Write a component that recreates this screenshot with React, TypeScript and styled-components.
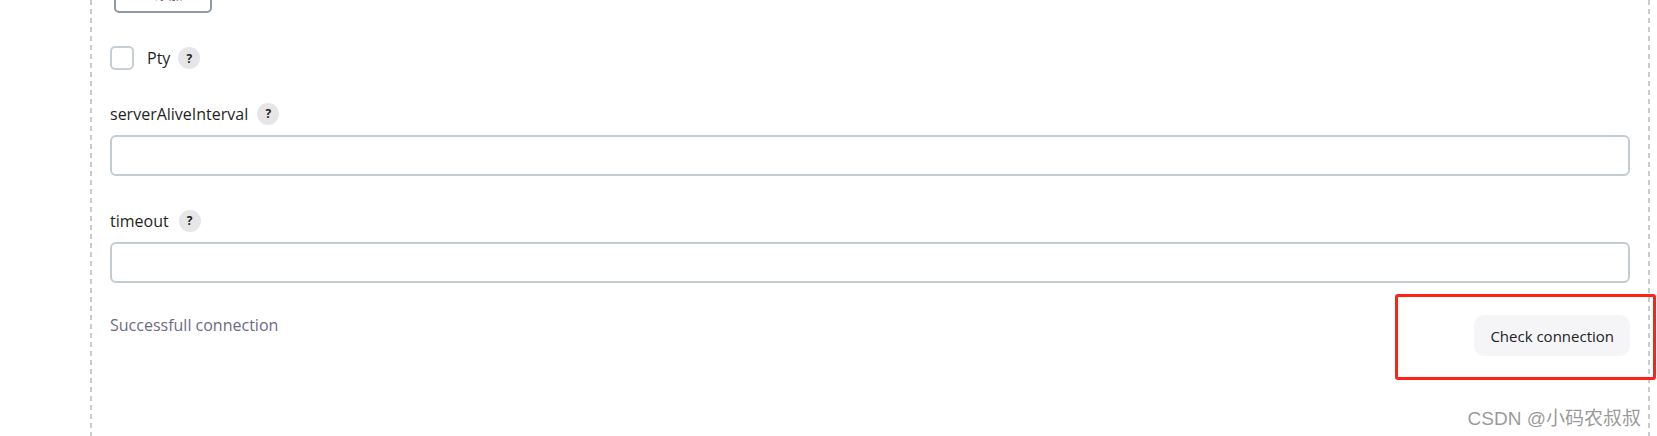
import React from "react";
import styled, { createGlobalStyle } from "styled-components";

const GlobalStyle = createGlobalStyle`
  html, body {
    margin: 0;
    padding: 0;
    background: #ffffff;
    overflow: hidden;
  }
  body {
    font-family: "Open Sans", "Noto Sans", "Noto Sans CJK SC", sans-serif;
    color: #1f1f24;
  }
`;

const dash = "repeating-linear-gradient(to bottom, #c6cdd2 0 5px, transparent 5px 9px)";

const Stage = styled.div`
  position: relative;
  width: 1657px;
  height: 436px;
  overflow: hidden;
`;

const Panel = styled.section`
  margin-left: 90px;
  width: 1560px;
  height: 436px;
  box-sizing: border-box;
  padding: 0 20px 0 20px;
  background: ${dash} left top / 2px 100% no-repeat,
    ${dash} right top / 2px 100% no-repeat;
  display: flex;
  flex-direction: column;
`;

const AddButton = styled.button`
  margin-top: -24px;
  margin-left: 4px;
  width: 98px;
  height: 37px;
  box-sizing: border-box;
  border: 2px solid #8f9aa3;
  border-radius: 5px;
  background: #fff;
  color: #6a7077;
  font-family: "Open Sans", "Noto Sans CJK SC", sans-serif;
  font-size: 14px;
  line-height: 16px;
  padding: 0 0 9px 0;
  display: flex;
  align-items: flex-end;
  justify-content: center;
`;

const CheckRow = styled.label`
  margin-top: 33px;
  height: 24px;
  display: flex;
  align-items: center;
  font-size: 16px;
`;

const CheckBox = styled.span`
  width: 24px;
  height: 24px;
  box-sizing: border-box;
  border: 2px solid #c7cfd4;
  border-radius: 5px;
  margin-right: 13px;
`;

const HelpIcon = styled.span<{ gap?: number }>`
  width: 22px;
  height: 22px;
  border-radius: 50%;
  background: #e6e6e8;
  color: #1e1e22;
  font-size: 12px;
  font-weight: 700;
  display: inline-flex;
  align-items: center;
  justify-content: center;
  margin-left: ${(p) => p.gap ?? 9}px;
`;

const Field = styled.div<{ top: number }>`
  margin-top: ${(p) => p.top}px;
  display: flex;
  flex-direction: column;
`;

const Label = styled.div`
  height: 22px;
  line-height: 22px;
  font-size: 16px;
  display: flex;
  align-items: center;
  color: #1f1f24;
`;

const Input = styled.input`
  margin-top: 10px;
  height: 41px;
  width: 100%;
  box-sizing: border-box;
  border: 2px solid #c3ccd1;
  border-radius: 6px;
  background: #fff;
  outline: none;
  font-family: inherit;
  font-size: 16px;
  padding: 0 10px;
`;

const StatusRow = styled.div`
  margin-top: 32px;
  display: flex;
  justify-content: space-between;
  align-items: flex-start;
`;

const StatusText = styled.span`
  font-size: 16px;
  line-height: 20px;
  color: #6e6b86;
`;

const CheckButton = styled.button`
  height: 41px;
  padding: 0 16px;
  border: none;
  border-radius: 10px;
  background: #f5f5f7;
  color: #222226;
  font-family: inherit;
  font-size: 15px;
`;

const Highlight = styled.div`
  position: absolute;
  left: 1395px;
  top: 294px;
  width: 261px;
  height: 86px;
  box-sizing: border-box;
  border: 3px solid #ff2218;
  border-radius: 3px;
  pointer-events: none;
`;

const Watermark = styled.div`
  position: absolute;
  right: 16px;
  top: 403px;
  font-family: "Liberation Sans", "Noto Sans CJK SC", sans-serif;
  font-size: 19px;
  color: rgba(120, 120, 120, 0.75);
  white-space: nowrap;
  pointer-events: none;
`;

export default function App() {
  return (
    <Stage>
      <GlobalStyle />
      <Panel>
        <AddButton>+ 添加</AddButton>
        <CheckRow>
          <CheckBox />
          Pty
          <HelpIcon gap={8}>?</HelpIcon>
        </CheckRow>
        <Field top={33}>
          <Label>
            serverAliveInterval
            <HelpIcon gap={9}>?</HelpIcon>
          </Label>
          <Input />
        </Field>
        <Field top={34}>
          <Label>
            timeout
            <HelpIcon gap={10}>?</HelpIcon>
          </Label>
          <Input />
        </Field>
        <StatusRow>
          <StatusText>Successfull connection</StatusText>
          <CheckButton>Check connection</CheckButton>
        </StatusRow>
      </Panel>
      <Highlight />
      <Watermark>CSDN @小码农叔叔</Watermark>
    </Stage>
  );
}
